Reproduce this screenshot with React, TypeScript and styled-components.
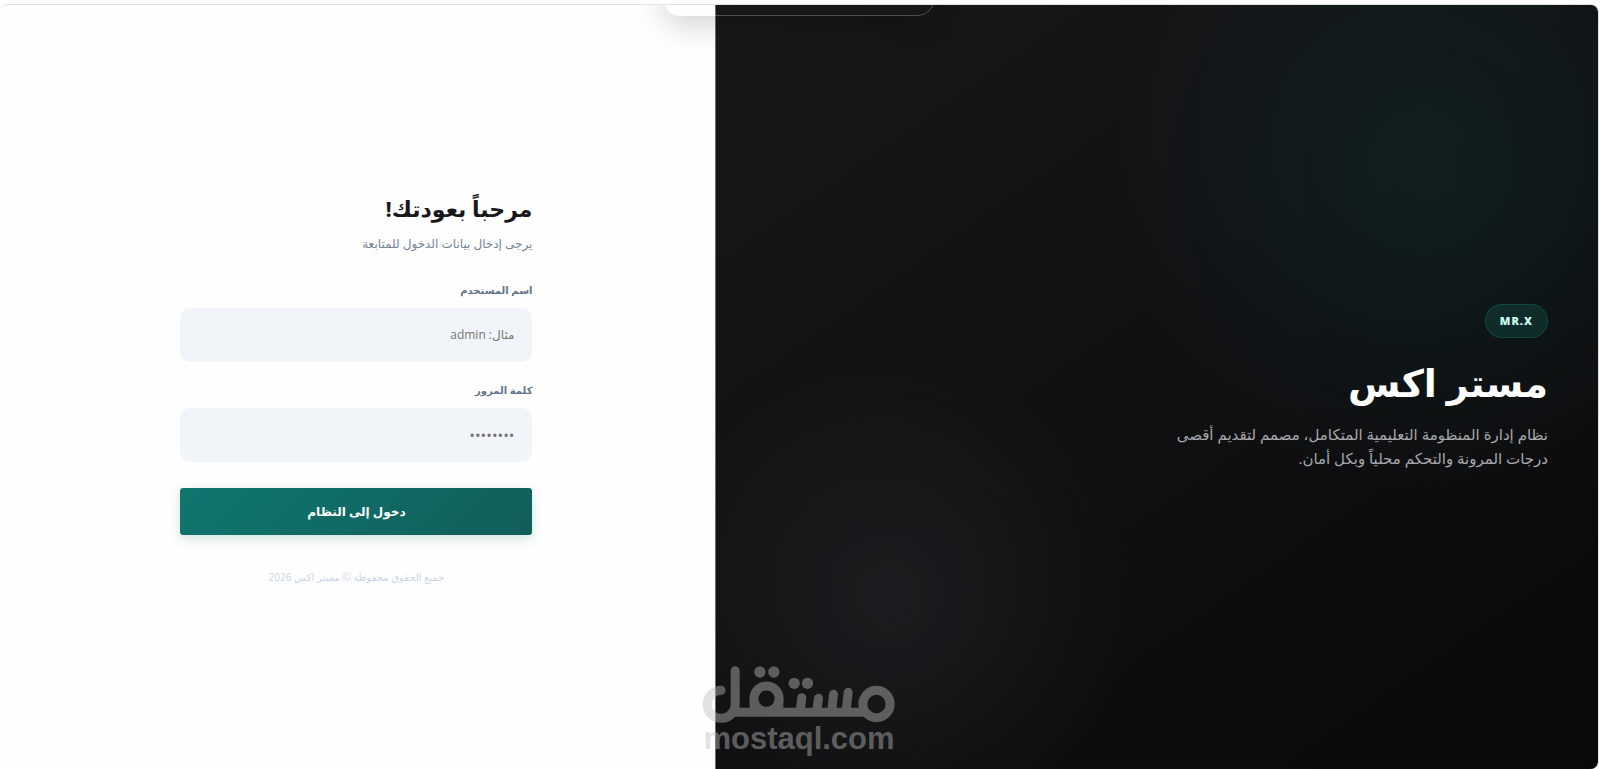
import React from "react";
import styled, { createGlobalStyle } from "styled-components";

const GlobalStyle = createGlobalStyle`
  *, *::before, *::after { box-sizing: border-box; }
  body {
    margin: 0;
    background: #ffffff;
    color: #18181b;
    font-family: "Open Sans", "DejaVu Sans", sans-serif;
  }
`;

const Page = styled.div`
  min-height: 100vh;
  padding: 4px 1px 0 0;
  display: flex;
`;

const Card = styled.main`
  position: relative;
  flex: 1;
  display: grid;
  grid-template-columns: 21fr 17fr;
  border: 1px solid #e2e2e4;
  border-width: 1px 1px 0 0;
  border-radius: 8px;
  overflow: hidden;
  background: #fefefe;
`;

const Brand = styled.section`
  display: flex;
  flex-direction: column;
  justify-content: center;
  align-items: flex-start;
  padding: 50px;
  border-left: 1px solid #6b6b70;
  background:
    radial-gradient(circle at 81% 22%, rgba(15, 118, 110, 0.14), transparent 34%),
    radial-gradient(circle at 20% 78%, rgba(63, 68, 70, 0.24), transparent 26%),
    linear-gradient(145deg, #18181a, #09090b);
`;

const Badge = styled.span`
  padding: 0 14px;
  border: 1px solid rgba(20, 184, 166, 0.2);
  border-radius: 17px;
  background: rgba(20, 184, 166, 0.14);
  color: #ccfbf1;
  font-size: 11px;
  font-weight: 800;
  letter-spacing: 1px;
  line-height: 32px;
`;

const BrandTitle = styled.h1`
  margin: 18px 0 14px;
  color: #ffffff;
  font-size: 38px;
  font-weight: 700;
  line-height: 52px;
`;

const BrandText = styled.p`
  margin: 0;
  max-width: 390px;
  color: #a8a8ad;
  font-size: 15px;
  line-height: 24px;
`;

const FormPanel = styled.section`
  display: flex;
  justify-content: center;
  align-items: center;
  padding: 24px 26px 24px 24px;
`;

const Form = styled.form`
  width: 100%;
  max-width: 352px;
`;

const FormTitle = styled.h2`
  margin: 0;
  font-size: 22px;
  font-weight: 700;
  line-height: 40px;
`;

const FormHint = styled.p`
  margin: 4px 0 24px;
  color: #758296;
  font-size: 12px;
  line-height: 24px;
`;

const Field = styled.div`
  display: flex;
  flex-direction: column;
  gap: 8px;
  margin-bottom: 18px;
`;

const Label = styled.label`
  color: #64748b;
  font-size: 10px;
  font-weight: 700;
  line-height: 20px;
`;

const Input = styled.input`
  width: 100%;
  height: 54px;
  padding: 0 18px;
  border: 0;
  border-radius: 10px;
  background: #f1f4f9;
  color: #18181b;
  font: inherit;
  font-size: ${({ type }) => (type === "password" ? "15px" : "12px")};

  &::placeholder { color: #757575; opacity: 1; }
`;

const Submit = styled.button`
  display: block;
  width: 100%;
  height: 47px;
  margin-top: 26px;
  border: 0;
  border-radius: 3px;
  background: linear-gradient(135deg, #0f766e, #115e59);
  box-shadow: 0 4px 12px rgba(15, 118, 110, 0.2);
  color: #ffffff;
  font: inherit;
  font-size: 12px;
  font-weight: 700;
`;

const Copyright = styled.p`
  margin: 32px 0 0;
  color: #cbd5e1;
  font-size: 10px;
  line-height: 20px;
  text-align: center;
`;

const Toast = styled.div`
  position: absolute;
  top: -38px;
  left: 50%;
  width: 270px;
  height: 49px;
  transform: translateX(-50%);
  border: 1px solid rgba(255, 255, 255, 0.24);
  border-radius: 16px;
  box-shadow: 0 10px 30px rgba(0, 0, 0, 0.16);
`;

const Watermark = styled.div`
  position: absolute;
  bottom: 15px;
  left: 50%;
  display: flex;
  flex-direction: column;
  align-items: center;
  transform: translateX(-50%);
  opacity: 0.43;
  color: #bebebe;
  font-family: "Liberation Sans", sans-serif;
  font-size: 31px;
  font-weight: 700;
  line-height: 31px;
  pointer-events: none;
`;

const Mark = () => (
  <svg width="193" height="58" viewBox="71 75 579 174" fill="none" stroke="currentColor" strokeWidth="27" strokeLinecap="round" aria-hidden="true">
    <circle cx="593" cy="192" r="41" />
    <path d="M169 92V191A42 42 0 1 1 127 151" />
    <path d="M160 217H560" strokeLinecap="butt" />
    <path d="M508 157L502 212M464 163L459 212M419 175L414 212M369 173L364 212" />
    <circle cx="263" cy="176" r="38" />
    <path d="M226 180V210M300 180V210" strokeLinecap="butt" />
    <g fill="currentColor" stroke="none">
      <circle cx="243" cy="96" r="17" />
      <circle cx="285" cy="96" r="17" />
      <circle cx="346" cy="130" r="17" />
      <circle cx="386" cy="130" r="17" />
    </g>
  </svg>
);

export default function App() {
  return (
    <>
      <GlobalStyle />
      <Page dir="rtl" lang="ar">
        <Card>
          <Brand>
            <Badge>MR.X</Badge>
            <BrandTitle>مستر اكس</BrandTitle>
            <BrandText>
              نظام إدارة المنظومة التعليمية المتكامل، مصمم لتقديم أقصى درجات المرونة والتحكم محلياً وبكل أمان.
            </BrandText>
          </Brand>
          <FormPanel>
            <Form onSubmit={(event) => event.preventDefault()}>
              <FormTitle>مرحباً بعودتك!</FormTitle>
              <FormHint>يرجى إدخال بيانات الدخول للمتابعة</FormHint>
              <Field>
                <Label htmlFor="username">اسم المستخدم</Label>
                <Input id="username" type="text" placeholder="مثال: admin" />
              </Field>
              <Field>
                <Label htmlFor="password">كلمة المرور</Label>
                <Input id="password" type="password" placeholder="••••••••" />
              </Field>
              <Submit type="submit">دخول إلى النظام</Submit>
              <Copyright>جميع الحقوق محفوظة © مستر اكس 2026</Copyright>
            </Form>
          </FormPanel>
          <Toast role="status" />
          <Watermark dir="ltr">
            <Mark />
            <span>mostaql.com</span>
          </Watermark>
        </Card>
      </Page>
    </>
  );
}
